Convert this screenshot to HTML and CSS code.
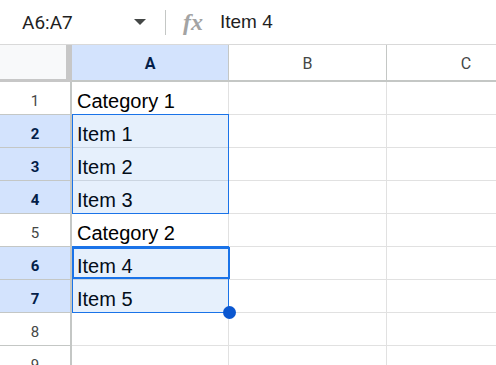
FILE: index.html
```html
<!DOCTYPE html>
<html lang="en">
<head>
    <meta charset="UTF-8">
    <meta name="viewport" content="width=device-width, initial-scale=1.0">
    <title>Sheet</title>
    <link rel="stylesheet" href="styles.css">
</head>
<body>
    <div class="formula-bar">
        <div class="name-box">
            <span class="range-name">A6:A7</span>
            <span class="caret"></span>
        </div>
        <div class="divider"></div>
        <span class="fx">fx</span>
        <span class="formula">Item 4</span>
    </div>

    <div class="sheet">
        <div class="corner"></div>
        <div class="col-head active">A</div>
        <div class="col-head">B</div>
        <div class="col-head last">C</div>

        <div class="row-head">1</div>
        <div class="cell">Category 1</div>
        <div class="cell"></div>
        <div class="cell last"></div>

        <div class="row-head active">2</div>
        <div class="cell">Item 1</div>
        <div class="cell"></div>
        <div class="cell last"></div>

        <div class="row-head active">3</div>
        <div class="cell">Item 2</div>
        <div class="cell"></div>
        <div class="cell last"></div>

        <div class="row-head active">4</div>
        <div class="cell">Item 3</div>
        <div class="cell"></div>
        <div class="cell last"></div>

        <div class="row-head">5</div>
        <div class="cell">Category 2</div>
        <div class="cell"></div>
        <div class="cell last"></div>

        <div class="row-head active">6</div>
        <div class="cell">Item 4</div>
        <div class="cell"></div>
        <div class="cell last"></div>

        <div class="row-head active">7</div>
        <div class="cell">Item 5</div>
        <div class="cell"></div>
        <div class="cell last"></div>

        <div class="row-head">8</div>
        <div class="cell"></div>
        <div class="cell"></div>
        <div class="cell last"></div>

        <div class="row-head">9</div>
        <div class="cell"></div>
        <div class="cell"></div>
        <div class="cell last"></div>

        <!-- selection overlays -->
        <div class="range range-one"></div>
        <div class="range range-two"></div>
        <div class="active-cell"></div>
        <div class="fill-handle"></div>
    </div>
</body>
</html>
```

FILE: styles.css
```css
*{
    margin: 0px;
    padding: 0px;
    box-sizing: border-box;
}
body{
    width: 496px;
    height: 365px;
    overflow: hidden;
    background-color: white;
    font-family: Roboto, "Liberation Sans", sans-serif;
    color: #1f1f1f;
}
.formula-bar{
    display: flex;
    align-items: center;
    height: 45px;
    border-bottom: 1px solid #d9d9d9;
}
.name-box{
    display: flex;
    align-items: center;
    width: 165px;
    padding-left: 22px;
    padding-right: 19px;
}
.range-name{
    font-size: 19px;
}
.caret{
    margin-left: auto;
    width: 0px;
    height: 0px;
    border-left: 6px solid transparent;
    border-right: 6px solid transparent;
    border-top: 6px solid #444746;
}
.divider{
    width: 1px;
    height: 25px;
    background-color: #c4c7c5;
}
.fx{
    margin-left: 17px;
    font-family: "Liberation Serif", serif;
    font-style: italic;
    font-weight: bold;
    font-size: 24px;
    color: #a3a3a3;
    width: 20px;
}
.formula{
    margin-left: 17px;
    font-family: "Liberation Sans", Arial, sans-serif;
    font-size: 19px;
}
.sheet{
    position: relative;
    display: grid;
    width: 496px;
    height: 320px;
    overflow: hidden;
    grid-template-columns: 72px 157px 158px 158px;
    grid-template-rows: 37px;
    grid-auto-rows: 33px;
}
.corner{
    background-color: #f8f9fa;
    border-right: 6px solid #c7c7c7;
    border-bottom: 3px solid #c7c7c7;
}
.col-head{
    display: flex;
    align-items: center;
    justify-content: center;
    padding-top: 1px;
    font-size: 16px;
    color: #444746;
    border-right: 1px solid #c4c7c5;
    border-bottom: 2px solid #c4c7c5;
}
.col-head.active{
    background-color: #d3e3fd;
    color: #041e49;
    font-weight: bold;
}
.row-head{
    display: flex;
    align-items: center;
    justify-content: center;
    padding-top: 5px;
    font-size: 15px;
    color: #444746;
    border-right: 2px solid #c4c7c5;
    border-bottom: 1px solid #c4c7c5;
}
.row-head.active{
    background-color: #d3e3fd;
    color: #041e49;
    font-weight: bold;
}
.cell{
    display: flex;
    align-items: flex-end;
    padding: 0px 5px 2px 5px;
    font-family: "Liberation Sans", Arial, sans-serif;
    font-size: 20px;
    line-height: 22px;
    color: #000000;
    border-right: 1px solid #e1e1e1;
    border-bottom: 1px solid #e1e1e1;
}
.last{
    border-right: none;
}
.range{
    position: absolute;
    left: 72px;
    width: 157px;
    border: 1px solid #1a73e8;
    background-color: rgba(26, 115, 232, 0.11);
}
.range-one{
    top: 69px;
    height: 100px;
}
.range-two{
    top: 201px;
    height: 67px;
}
.active-cell{
    position: absolute;
    left: 72px;
    top: 202px;
    width: 158px;
    height: 32px;
    border: 2px solid #1a73e8;
}
.fill-handle{
    position: absolute;
    left: 223px;
    top: 261px;
    width: 13px;
    height: 13px;
    border-radius: 50%;
    background-color: #0b57d0;
}
```
